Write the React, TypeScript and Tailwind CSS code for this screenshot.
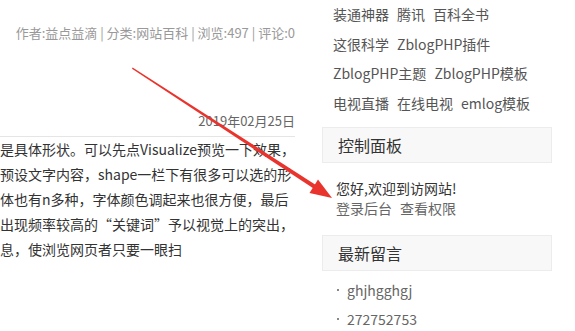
import React from 'react';

const TAG_ROWS = [
    ['装通神器', '腾讯', '百科全书'],
    ['这很科学', 'ZblogPHP插件'],
    ['ZblogPHP主题', 'ZblogPHP模板'],
    ['电视直播', '在线电视', 'emlog模板'],
];

const ARTICLE_LINES = [
    '是具体形状。可以先点Visualize预览一下效果，',
    '预设文字内容，shape一栏下有很多可以选的形',
    '体也有n多种，字体颜色调起来也很方便，最后',
    '出现频率较高的“关键词”予以视觉上的突出，',
    '息，使浏览网页者只要一眼扫',
];

const COMMENTS = ['ghjhgghgj', '272752753'];

const font = "font-['Microsoft_YaHei','Noto_Sans_CJK_SC',sans-serif]";

const PanelTitle: React.FC<{ title: string }> = ({ title }) => (
    <div className="h-[36px] border border-[#ececec] bg-[#f8f8f8] pl-[15px] text-[16px] leading-[34px] text-[#333]">
        {title}
    </div>
);

// red annotation arrow laid over the screenshot
const Arrow: React.FC = () => (
    <svg className="pointer-events-none absolute left-0 top-0" width="575" height="331">
        <polygon points="132.6,67.6 132,68.8 315.5,189.8 317.8,186.2" fill="#e8342c" />
        <polygon points="332,198 309.5,193 318,179.5" fill="#e8342c" />
    </svg>
);

const App: React.FC = () => {
    return (
        <div className={`relative h-[331px] w-[575px] overflow-hidden bg-white ${font}`}>
            <div className="flex">
                {/* Article column */}
                <div className="w-[295px] overflow-hidden">
                    <div className="pt-[24px] text-right text-[13px] leading-[18px] text-[#999]">
                        作者:益点益滴 | 分类:网站百科 | 浏览:497 | 评论:0
                    </div>
                    <div className="mt-[70px] border-b border-[#e5e5e5] pb-[6px] text-right text-[13px] leading-[18px] text-[#666]">
                        2019年02月25日
                    </div>
                    <div className="text-[14px] leading-[25px] text-[#333]">
                        {ARTICLE_LINES.map((line) => (
                            <div key={line} className="whitespace-nowrap">{line}</div>
                        ))}
                    </div>
                </div>

                {/* Sidebar */}
                <div className="ml-[27px] w-[230px]">
                    <div className="pl-[11px] text-[14px] text-[#555]">
                        {TAG_ROWS.map((row, i) => (
                            <div key={i} className="flex h-[29.5px] items-center gap-[8px] whitespace-nowrap">
                                {row.map((tag) => (
                                    <span key={tag}>{tag}</span>
                                ))}
                            </div>
                        ))}
                    </div>

                    <div className="mt-[9px]">
                        <PanelTitle title="控制面板" />
                        <div className="mt-[15px] pl-[14px] text-[14px] leading-[20px]">
                            <div className="text-[#333]">您好,欢迎到访网站!</div>
                            <div className="flex gap-[8px] text-[#666]">
                                <span>登录后台</span>
                                <span>查看权限</span>
                            </div>
                        </div>
                    </div>

                    <div className="mt-[17px]">
                        <PanelTitle title="最新留言" />
                        <ul className="mt-[5px] pl-[14px] text-[14px] leading-[28.5px] text-[#666]">
                            {COMMENTS.map((c) => (
                                <li key={c} className="flex items-center">
                                    <span className="mr-[8px] ml-[1px] h-[2px] w-[2px] shrink-0 bg-[#888]" />
                                    <span>{c}</span>
                                </li>
                            ))}
                        </ul>
                    </div>
                </div>
            </div>
            <Arrow />
        </div>
    );
};

export default App;
